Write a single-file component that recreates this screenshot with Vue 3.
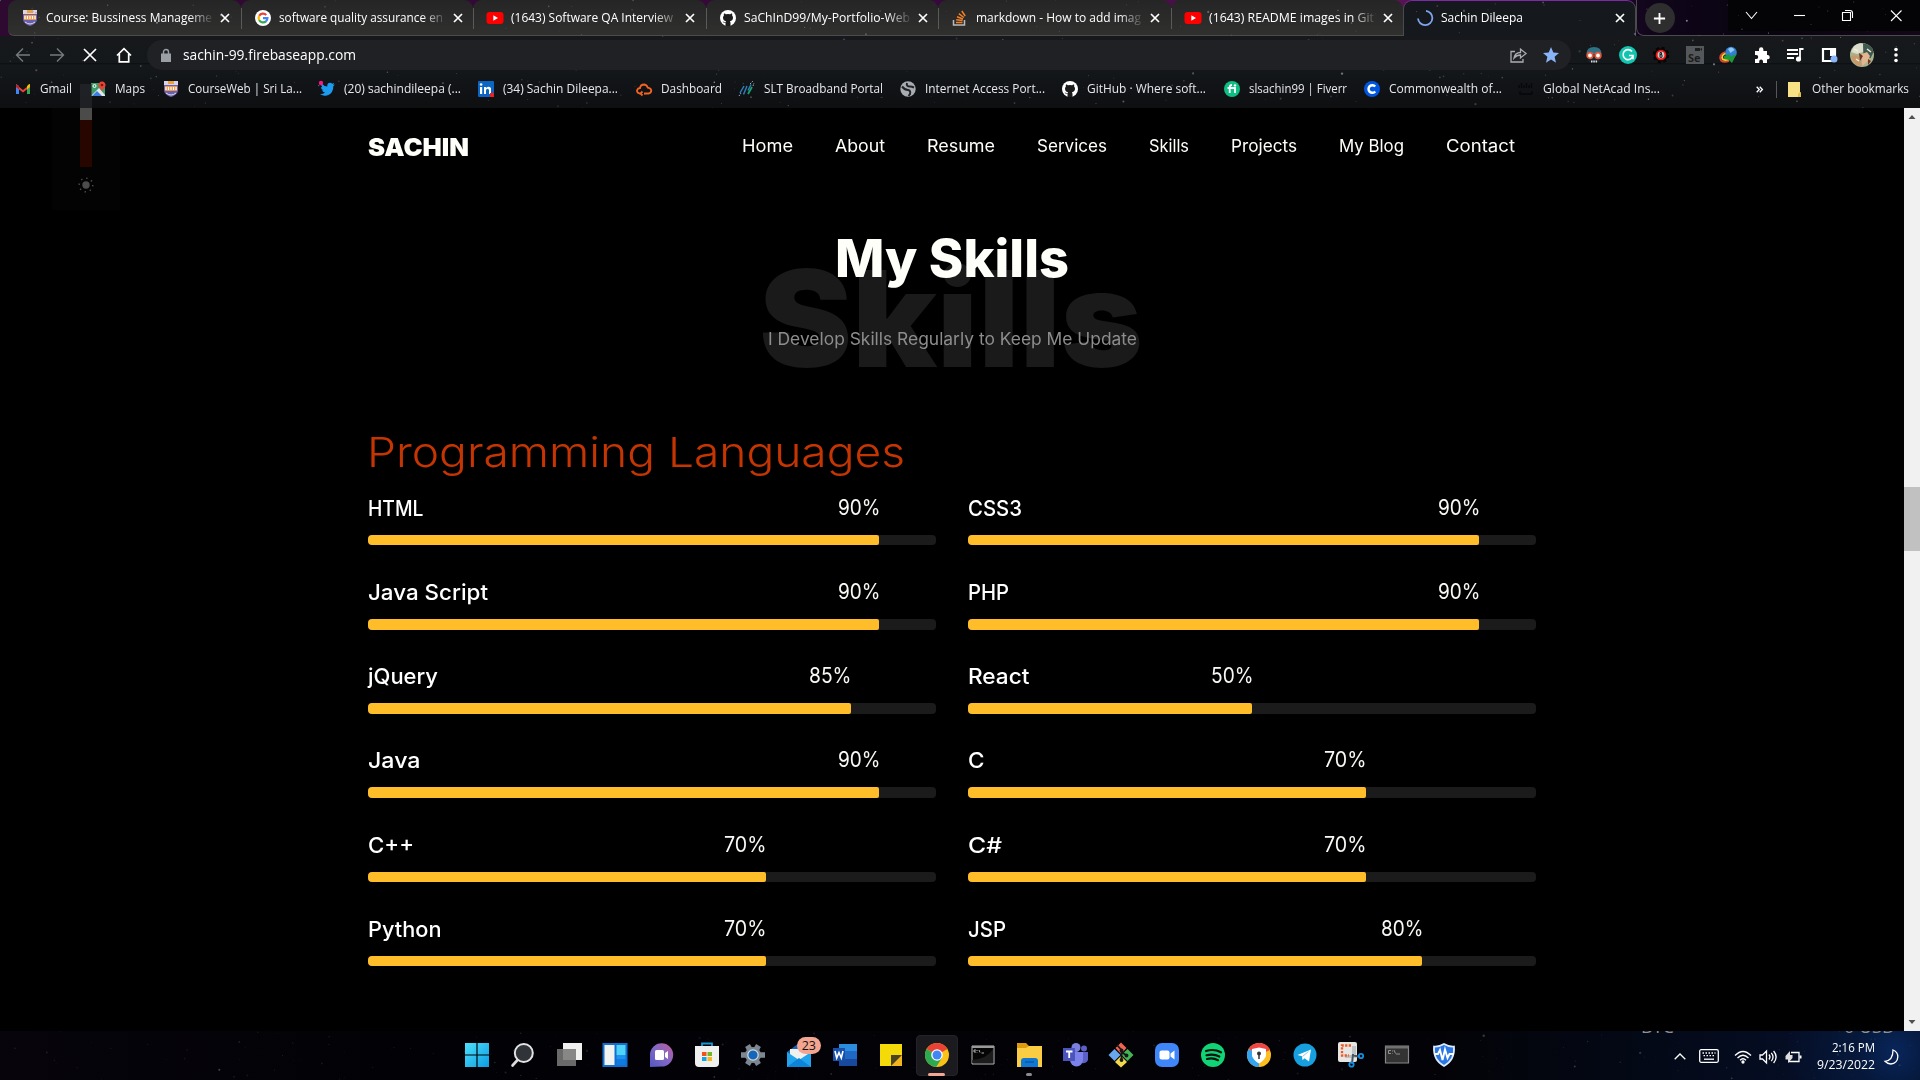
<script setup>
// Stretches a text run horizontally so that it fills the given width.
const vFit = {
  mounted(el, { value }) {
    const natural = el.getBoundingClientRect().width
    if (!natural || !value) return
    el.style.transform = `scaleX(${value / natural})`
    el.style.marginRight = `${value - natural}px`
  },
}

const shield = '<path d="M1 0h14v10q-1 4-7 6-6-2-7-6z" fill="#6a60b0"/><path d="M1 0h14v4H1z" fill="#ddd3e6"/><path d="M5 0h6v3H5z" fill="#e8a33c"/><path d="M2 5h12v5H2z" fill="#eb9850"/><path d="M3 6v3M5.500 6v3M8 6v3M10.500 6v3M13 6v3" stroke="#fff" stroke-width="1.200"/><path d="M3 12q5 4 10 0" stroke="#ddd" fill="none"/>'
const github = '<circle cx="8" cy="8" r="8" fill="#fff"/><path d="M5.500 16v-3C3.500 13.200 3.400 12 2.600 11.500c1.600-.3 1.600 1.500 3 .8.100-.5.300-.8.500-1C3.800 11 3 9.500 3 7.600c0-1 .4-1.700.9-2.200-.2-.7-.1-1.500.1-2 1 0 1.700.6 2.100.9a8 8 0 0 1 3.800 0c.5-.3 1.200-.9 2.100-.9.300.6.300 1.400.1 2 .6.600.9 1.300.9 2.200 0 2-.9 3.400-3.100 3.700.4.400.6 1 .6 1.600V16z" fill="#1c1c1c"/>'
const youtube = '<rect x="-.5" y="2" width="17" height="12" rx="3" fill="#f00"/><path d="M6.300 5.300 11 8l-4.700 2.700z" fill="#fff"/>'

const tabs = [
  { title: 'Course: Bussiness Manageme', w: 166, icon: shield },
  { title: 'software quality assurance en', w: 164, icon: '<circle cx="8" cy="8" r="8" fill="#fff"/><g fill="none" stroke-width="2.200"><path d="M4.200 5.800A4.500 4.500 0 0 1 11.300 4.900" stroke="#ea4335"/><path d="M4.200 10.200a4.500 4.500 0 0 1 0-4.400" stroke="#fbbc05"/><path d="M11 11.300a4.500 4.500 0 0 1-6.800-1.100" stroke="#34a853"/><path d="M8 8.200h4.400a4.500 4.500 0 0 1-1.500 3.200" stroke="#4285f4"/></g>' },
  { title: '(1643) Software QA Interview', w: 162, icon: youtube },
  { title: 'SaChInD99/My-Portfolio-Web', w: 166, icon: github },
  { title: 'markdown - How to add imag', w: 165, icon: '<path d="M1.500 10v5h11v-5" fill="none" stroke="#bcbbbb" stroke-width="1.500"/><path d="M4 12.500h6.500M4.200 9.700l6.400.9M5 6.700l6 2.300M6.800 3.600l5 3.900M9.800 1l3.400 5" stroke="#f48024" stroke-width="1.500"/>' },
  { title: '(1643) README images in Git', w: 165, icon: youtube },
]

const bookmarks = [
  { t: 'Gmail', w: 32, slot: 75, icon: '<path d="M1 13V3l3 2v8z" fill="#4285f4"/><path d="M12 13V5l3-2v10z" fill="#34a853"/><path d="M1 3.500 8 9l7-5.500V6l-7 5.500L1 6z" fill="#ea4335"/><path d="M12 5.500 14 3l1 .5V6l-3 2.500z" fill="#fbbc04"/><path d="M1 6V3.500L4 5v3.500z" fill="#c5221f"/>' },
  { t: 'Maps', w: 30, slot: 73, icon: '<path d="M1 2h14v13H1z" fill="#3a9d6a"/><path d="M1 15 9 7l6 7v1z" fill="#e6e6e6"/><path d="m2 15 5-5 5 5z" fill="#3b7de0"/><path d="M12 10 8.500 5a3.600 3.600 0 1 1 7 0z" fill="#e94335"/><circle cx="12" cy="4" r="1.300" fill="#7c1712"/><circle cx="4.500" cy="5" r="1.500" fill="none" stroke="#fff"/>' },
  { t: "CourseWeb | Sri La...", w: 114, slot: 156, icon: shield },
  { t: '(20) sachindileepa (...', w: 117, slot: 159, icon: '<path d="M1 13q3 .2 5-1.500-2.500-.4-3-2.200h1.400Q1.700 8.200 2 6l1.300.3Q1.200 4.500 2.400 2.200 5 5.300 8.300 5.400 8 2 11 1.800q1.400 0 2.300 1l2-.7-1.200 1.800 1.800-.4-1.600 1.800C14.300 14 7 17 1 13" fill="#1d9bf0"/><circle cx="2" cy="2" r="2.200" fill="#f91880"/>' },
  { t: '(34) Sachin Dileepa...', w: 115, slot: 158, icon: '<rect width="16" height="16" rx="1" fill="#0a66c2"/><path d="M2 6h2.200v7H2zM6 6h2v1q2.500-2.500 5 0v6h-2V9q-1.500-2.500-3 0v4H6z" fill="#fff"/><circle cx="3.100" cy="3.500" r="1.300" fill="#fff"/><rect x="12" y="12" width="4" height="4" fill="#f02020"/>' },
  { t: 'Dashboard', w: 61, slot: 103, icon: '<path d="M5 12.500H3.500Q.7 11.800 1 9.200 1.800 7 4 7q.5-3.500 4.200-3.500Q11 4 11.800 6.700q3.200.3 3.500 3-.3 2.500-2.800 2.800H8m-1.500-2L4.500 12.500l2 2" fill="none" stroke="#f26322" stroke-width="1.800"/>' },
  { t: 'SLT Broadband Portal', w: 119, slot: 161, icon: '<path d="M1 12 5 5M4.500 13.500 8 5M9 9.500l3-6" stroke="#2e7db8" stroke-width="1.500"/><path d="M9 13l4-7" stroke="#1ca06a" stroke-width="1.800"/><path d="M11 3l3-3M0 15l2-3M14 5l1-3" stroke="#9ab" stroke-dasharray="1.500 1"/>' },
  { t: 'Internet Access Port...', w: 120, slot: 162, icon: '<circle cx="8" cy="8" r="7.700" fill="#a9adb1"/><path d="M2 5.500q3 3.500 6 3.500 3 .5 2 4l-1.500 2" stroke="#202327" stroke-width="2" fill="none"/><path d="M7 2q-1 3.500 3 3.500 2 0 4 1" stroke="#202327" stroke-width="2" fill="none"/>' },
  { t: 'GitHub · Where soft...', w: 119, slot: 162, icon: github },
  { t: 'slsachin99 | Fiverr', w: 98, slot: 140, icon: '<circle cx="8" cy="8" r="8" fill="#0dbf83"/><path d="M3.500 7H11v5M5.700 12V6q0-2 2.300-2" stroke="#fff" stroke-width="1.800" fill="none"/><circle cx="11" cy="4.400" r="1.200" fill="#fff"/>' },
  { t: 'Commonwealth of...', w: 113, slot: 154, icon: '<circle cx="8" cy="8" r="8" fill="#0056e0"/><path d="M11.200 5.500a3.800 3.800 0 1 0 0 5" stroke="#fff" stroke-width="2.500" fill="none"/>' },
  { t: 'Global NetAcad Ins...', w: 117, slot: 150, icon: '<path d="M1 4v3M3.500 2v5M6 4v3M8.500 2v5M11 4v3M13.500 2v5M2 10v3h12v-3" stroke="#05070a" stroke-width="1.300" fill="none"/>' },
]

const extensions = [
  { name: 'mask', icon: '<path d="M1.500 8q0-7 7.500-7t7.500 7z" fill="#2f7185"/><path d="M3.500 8h11v8h-11z" fill="#17242c"/><circle cx="5" cy="9.500" r="2.800" fill="#fff" stroke="#e0583c" stroke-width="1.800"/><circle cx="13" cy="9.500" r="2.800" fill="#fff" stroke="#e0583c" stroke-width="1.800"/><path d="M6 15.500h1.500m.8 0h1.500m.8 0h1.500" stroke="#ddd" stroke-width="2"/>' },
  { name: 'grammar', icon: '<circle cx="9" cy="9" r="9" fill="#11c5ae"/><path d="M13 5.500A5 5 0 1 0 14 9.500h-4m4 0v3.800" stroke="#fff" stroke-width="1.600" fill="none"/>' },
  { name: 'blocker', icon: '<circle cx="9" cy="9" r="6.800" fill="#0d0505" stroke="#060505" stroke-width="3" stroke-dasharray="3 2.400"/><circle cx="9" cy="9" r="4.400" fill="#ccc" stroke="#e81414" stroke-width="1.900"/><path d="M8 6.500v5m0-5h1.500v2.200H8h2v2.600H8" stroke="#222" fill="none"/>' },
  { name: 'selenium', icon: '<path d="M0 0h18v18H0z" fill="#55585a"/><path d="M9 2h5v3H9zM14 3l2-1v3z" fill="#1b1d1f"/><text x="2" y="16" font-family="Open Sans" font-size="11" font-weight="700" fill="#1b1d1f">Se</text>' },
  { name: 'download', icon: '<path d="M6 6Q-1 9 2 14.500q3 2.500 8 .5" fill="none" stroke="#e3442e" stroke-width="1.800"/><path d="M8 7Q1 9 4 13.500q2 1 6 0" fill="none" stroke="#f3d231" stroke-width="1.800"/><circle cx="12" cy="6.500" r="5.800" fill="#347fd0"/><path d="M9 3q4-3.500 6.500 1l-4 3z" fill="#8bc9f3"/><path d="M5 10l5-2 1.500 2.500L17.500 8 13 17l-3-3-5-1z" fill="#1a9b37"/>' },
  { name: 'puzzle', icon: '<path d="M2 5h4V3.500a2.200 2.200 0 0 1 4.400 0V5H14v4h1a2.200 2.200 0 0 1 0 4.300h-1V17h-4v-1.500a1.900 1.900 0 0 0-3.800 0V17H2v-4h1.300a1.900 1.900 0 0 0 0-3.900H2z" fill="#fff"/>' },
  { name: 'playlist', icon: '<path d="M1 4h11M1 8h11M1 12h7" stroke="#fff" stroke-width="1.800"/><path d="M17.500 3H14v10" stroke="#fff" stroke-width="1.800" fill="none"/><circle cx="12.500" cy="13" r="2.600" fill="#fff"/>' },
  { name: 'panel', icon: '<path d="M3 3h12v12H3z" fill="none" stroke="#fff" stroke-width="2.200"/><path d="M10 2h6v8h-6z" fill="#fff"/><circle cx="14" cy="13" r="3.500" fill="#8ab4f8"/>' },
]

const menu = [
  ['Home', 51, 42], ['About', 50, 42], ['Resume', 68, 42], ['Services', 70, 42],
  ['Skills', 40, 42], ['Projects', 66, 42], ['My Blog', 65, 42], ['Contact', 69, 0],
].map(([t, w, gap]) => ({ t, w, gap }))

const columns = [
  [['HTML', 54.5, 90], ['Java Script', 119, 90], ['jQuery', 69, 85], ['Java', 51.5, 90], ['C++', 45, 70], ['Python', 72.5, 70]],
  [['CSS3', 53, 90], ['PHP', 40, 90], ['React', 60.5, 50], ['C', 15.5, 70], ['C#', 33, 70], ['JSP', 37, 80]],
].map((col) => col.map(([name, w, level]) => ({ name, w, level })))

const chromeWheel = '<circle cx="12" cy="12" r="12" fill="#fbc116"/><path d="M12 12 1.600 6A12 12 0 0 1 22.400 6z" fill="#ea4335"/><path d="M12 12 1.600 6a12 12 0 0 0 9.500 18L17 15z" fill="#2da94f"/>'
const apps = [
  { icon: '<defs><linearGradient id="win" x2="1" y2="1"><stop stop-color="#4ee0fb"/><stop offset="1" stop-color="#0c9ce2"/></linearGradient></defs><path d="M0 0h11.400v11.400H0zM12.600 0H24v11.400H12.600zM0 12.600h11.400V24H0zM12.600 12.600H24V24H12.600z" fill="url(#win)"/>' },
  { icon: '<path d="M7 16.500 1.500 22.500" stroke="#dcdcdc" stroke-width="2.600" stroke-linecap="round"/><circle cx="12.800" cy="10" r="9" fill="#303338" stroke="#e3e3e3" stroke-width="2"/>' },
  { icon: '<path d="M6 0h19v17H6z" fill="#f1f1ef"/><path d="M0 6h19v17H0z" fill="#777" fill-opacity=".88"/>' },
  { icon: '<path d="M-.5 0h25v24h-25z" fill="#126fd0"/><path d="M1.500 2h10v20h-10z" fill="#f2f2f0"/><path d="M13.500 2h9v10h-9z" fill="#4fd3fb"/><path d="M13.500 12h9v4h-9z" fill="#1d92ee"/><path d="M13.500 16h9v6h-9z" fill="#0f7be0"/>' },
  { icon: '<defs><linearGradient id="ch" x1="1" x2="0" y2="1"><stop stop-color="#c05a9a"/><stop offset=".5" stop-color="#8168c6"/><stop offset="1" stop-color="#5158c4"/></linearGradient></defs><path d="M1 24V12A11.600 11.600 0 1 1 12.500 23.500z" fill="url(#ch)"/><rect x="6" y="7" width="9" height="10" rx="1.500" fill="#fff"/><path d="m16 10 3-2v8l-3-2z" fill="#fff"/>' },
  { icon: '<path d="M7 4V.500h10V4" fill="none" stroke="#1597d4" stroke-width="1.800"/><path d="M0 3h24v17q0 4-4 4H4q-4 0-4-4z" fill="#f0f0ee"/><path d="M7 9h4.500v4H7z" fill="#f1511b"/><path d="M12.500 9H17v4h-4.500z" fill="#6fb729"/><path d="M7 14h4.500v4H7z" fill="#17a3e3"/><path d="M12.500 14H17v4h-4.500z" fill="#fbb813"/>' },
  { icon: '<circle cx="12" cy="12" r="8" fill="#7c8791"/><path d="M6.500 2.500 12 12m5.500-9.500L12 12m-5.500 9.500L12 12m5.500 9.500L12 12M0 12h24" stroke="#7c8791" stroke-width="5.500"/><circle cx="12" cy="12" r="5.200" fill="#1467b8" stroke="#d5dade" stroke-width="1.200"/>' },
  { badge: '23', icon: '<path d="M0 9 12 0l12 9v14H0z" fill="#1762b4"/><path d="M3 6h19v13H3z" fill="#f0f0ee"/><path d="m0 9 12 8 12-8v15H0z" fill="#22a4ec"/><path d="m0 24 12-9 12 9z" fill="#0c84da"/>' },
  { icon: '<path d="M6 1h18v22H6z" fill="#2a8de0"/><path d="M6 8h18v8H6z" fill="#1f68c4"/><path d="M6 16h18v7H6z" fill="#174a9c"/><path d="M0 5h12v13H0z" fill="#184fa8"/><path d="m2 8 1.700 7L6 9.500 8.300 15 10 8" stroke="#fff" stroke-width="1.600" fill="none"/>' },
  { icon: '<path d="M1 1h22v12l-9 10H1z" fill="#f4da08"/><path d="M12 12h11v11H12z" fill="#f3b51d"/><path d="M12 12h11L12 23z" fill="#4a4420"/>' },
  { active: true, icon: chromeWheel + '<circle cx="12" cy="12" r="5.800" fill="#fff"/><circle cx="12" cy="12" r="4.500" fill="#4285f4"/>' },
  { icon: '<path d="M1 3h22v18H1z" fill="#050505" stroke="#b7b7b7"/><path d="M1 3h22v2H1z" fill="#999"/><path d="M1 17Q16 16 22 6v14H1z" fill="#222" fill-opacity=".8"/><path d="M5 7H3v2h2M6 7v1m0 1v.5M8 7l1 2.500M10.500 10H13" stroke="#ddd" stroke-width=".8" fill="none"/>' },
  { open: true, icon: '<path d="M0 0h9l3 3h12v8H0z" fill="#dd9c0d"/><path d="M0 5h9l3-2h13v21H0z" fill="#fbcd43"/><path d="M4 24v-6q0-3 3-3h11q3 0 3 3v6z" fill="#1077d2"/><path d="M8 19h9" stroke="#0a5aa5" stroke-width="1.500"/>' },
  { icon: '<circle cx="13" cy="4.500" r="4.500" fill="#7b7fe0"/><circle cx="21" cy="5.500" r="3" fill="#5a60c6"/><path d="M14 9h11v8q-2 4-7 3z" fill="#5a60c6"/><path d="M7 9h13v8a6.500 6.500 0 0 1-13 0z" fill="#7b83eb"/><path d="M0 5h12v13H0z" fill="#4b53bc"/><path d="M3 8.500h6.500M6.200 8.500V15" stroke="#fff" stroke-width="1.800"/>' },
  { icon: '<path d="M12-.5 17.500 5 12 11 6.500 5z" fill="#f1634f"/><path d="M5.500 6 11.500 12l-6 6-6-6z" fill="#6aa5f0"/><path d="m18.500 6 6 6-6 6-6-6z" fill="#45b455"/><path d="m12 13 6 6-6 5.500L6 19z" fill="#f3d84e"/><path d="M8 2l4.500 5v10M12.500 9l5 3.500" stroke="#15181b" stroke-width="1.800" fill="none"/><circle cx="12.500" cy="7.500" r="1.900" fill="#15181b"/><circle cx="12.500" cy="17" r="1.900" fill="#15181b"/><circle cx="17.500" cy="12.500" r="1.900" fill="#15181b"/>' },
  { icon: '<rect width="24" height="24" rx="7" fill="#3f86f8"/><rect x="4.500" y="7.500" width="10" height="9" rx="2" fill="#fff"/><path d="m15.500 10.500 4-3v9l-4-3z" fill="#fff"/>' },
  { icon: '<circle cx="12" cy="12" r="12" fill="#11d476"/><path d="M5 8q8-2.500 15 1.300M5.500 12.300q7-2 12.800 1.200M6 16q6-1.500 11 1.200" stroke="#06150d" stroke-width="2.200" stroke-linecap="round" fill="none"/>' },
  { icon: '<circle cx="12" cy="12" r="12" fill="#fdbf20"/><path d="M12 12 1.600 6A12 12 0 0 1 23 7z" fill="#f04545"/><path d="M12 12 1.600 6A12 12 0 0 0 12 24z" fill="#35a4ef"/><path d="M5 6l7-1.500L19 6v7q-2 5-7 7.500-5-2.500-7-7.500z" fill="#fff"/><circle cx="12" cy="10.500" r="2" fill="#333"/><path d="M12 10v6" stroke="#333" stroke-width="1.500"/>' },
  { icon: '<circle cx="12" cy="12" r="11.500" fill="#16a0e0"/><path d="M4.500 12 18 6.500 16 18.500l-4.500-3.300-2 2-.5-4z" fill="#fff"/><path d="m9.500 13.500 6-5" stroke="#8bcbed"/>' },
  { icon: '<rect x="-1" y="-1" width="19" height="20" rx="2" fill="#e6e6e4"/><path d="M13 3h4v12H6v-3h7z" fill="#bfc3c4"/><path d="M12 2.500H3v10h7" stroke="#ee5a24" stroke-width="2.300" stroke-dasharray="2.300 1.300" fill="none"/><path d="m13 12 8 2m-7-3-1 10" stroke="#46555f" stroke-width="2"/><circle cx="22" cy="13" r="2.200" fill="none" stroke="#128fe0" stroke-width="1.800"/><circle cx="12.500" cy="21.500" r="2.200" fill="none" stroke="#128fe0" stroke-width="1.800"/>' },
  { icon: '<path d="M.5 3h23v17H.5z" fill="#333" stroke="#888" stroke-width="1.200"/><path d="M.5 3h23v2.500H.5z" fill="#707070"/><path d="M6 7.500H3.500v3H6M7.500 7.500v1M7.500 10v.5M9 7l1.500 3.500M11 11h4" stroke="#aaa" stroke-width=".8" fill="none"/>' },
  { icon: '<path d="M12 1q5 3 10 2.500Q23 17 12 23 1 17 2 3.500 7 4 12 1z" fill="#2a76e3" stroke="#dcebff" stroke-width="1.700"/><path d="M2.500 11H6l2-4 2.500 10L13 6.500 15.500 15l2-4H22" fill="none" stroke="#fff" stroke-width="1.900"/>' },
]

// Deterministic star field for the browser theme and the desktop wallpaper.
function starField(seed, count, width, height) {
  let s = seed
  const rnd = () => ((s = (s * 16807) % 2147483647) / 2147483647)
  const tints = ['#8f8c88', '#60656e', '#9aa6c4', '#6b5148', '#43507a', '#555']
  return Array.from({ length: count }, () => ({
    x: rnd() * width, y: rnd() * height, r: 0.4 + rnd() * rnd() * 0.9,
    c: tints[Math.floor(rnd() * tints.length)], o: 0.3 + rnd() * 0.6,
  }))
}
const themeStars = starField(4217, 330, 1920, 108)
const wallStars = starField(991, 180, 1920, 49)
</script>

<template>
  <div class="screen">
    <header class="browser">
      <svg class="stars" width="1920" height="108">
        <circle v-for="(s, i) in themeStars" :key="i" :cx="s.x" :cy="s.y" :r="s.r" :fill="s.c" :opacity="s.o" />
      </svg>

      <div class="tabstrip">
        <div class="tabs">
          <div v-for="(tab, i) in tabs" :key="i" class="tab">
            <svg class="fav" viewBox="0 0 16 16" v-html="tab.icon"></svg>
            <div class="title faded"><span v-fit="tab.w" class="fit">{{ tab.title }}</span></div>
            <svg class="close" viewBox="0 0 10 10"><path d="m1 1 8 8M9 1 1 9" /></svg>
          </div>
          <div class="tab active">
            <svg class="fav" viewBox="0 0 16 16"><path d="M9 .8A7.200 7.200 0 1 1 1 8.500" fill="none" stroke="#7ea6ee" stroke-width="1.800" /></svg>
            <div class="title"><span v-fit="82" class="fit">Sachin Dileepa</span></div>
            <svg class="close" viewBox="0 0 10 10"><path d="m1 1 8 8M9 1 1 9" /></svg>
          </div>
        </div>
        <div class="strip-rest">
          <div class="newtab"><svg viewBox="0 0 14 14"><path d="M7 1v12M1 7h12" stroke="#fff" stroke-width="2" /></svg></div>
          <div class="winctl">
            <svg viewBox="0 0 48 32"><path d="m18 12 5.500 6.500L29 12" /></svg>
            <svg viewBox="0 0 48 32"><path d="M18 15.500h11" /></svg>
            <svg viewBox="0 0 48 32"><path d="M18.500 12.500h8v8h-8zM21 10.500h5q2.500 0 2.500 2.500v5" /></svg>
            <svg viewBox="0 0 48 32"><path d="m19 10.500 10.500 10.500M29.500 10.500 19 21" /></svg>
          </div>
        </div>
      </div>

      <div class="toolbar">
        <div class="navbtns">
          <svg viewBox="0 0 16 16" class="dim"><path d="M15 8H1.500M8 1.500 1.500 8 8 14.500" /></svg>
          <svg viewBox="0 0 16 16" class="dim"><path d="M1 8h13.500M8 1.500 14.500 8 8 14.500" /></svg>
          <svg viewBox="0 0 16 16"><path d="m2 2 12 12M14 2 2 14" /></svg>
          <svg viewBox="0 0 16 16"><path d="M1 8.500 8 1.700l7 6.800M3.300 7v7.800h9.400V7" /></svg>
        </div>
        <div class="omnibox">
          <svg class="lock" viewBox="0 0 10 13"><path d="M0 4.500h10V13H0z" fill="#9aa0a6" /><path d="M2.500 5V3a2.500 2.500 0 0 1 5 0v2" fill="none" stroke="#9aa0a6" stroke-width="1.400" /></svg>
          <span v-fit="173" class="fit url">sachin-99.firebaseapp.com</span>
          <svg class="share" viewBox="0 0 17 16"><path d="M5 4.500H1V15h12v-3M4 11q1-5.500 6.500-5.500V2L16 6.500 10.500 11V8Q6.500 8 4 11z" fill="none" stroke="#aaaeb2" stroke-width="1.300" /></svg>
          <svg class="fav star" viewBox="0 0 16 16"><path d="m8 0 2.300 5.600 5.700.5-4.400 3.700 1.400 5.900L8 12.500 3 15.700l1.400-5.900L0 6.100l5.700-.5z" fill="#8ab4f8" /></svg>
        </div>
        <div class="exts">
          <svg v-for="e in extensions" :key="e.name" viewBox="0 0 18 18" v-html="e.icon"></svg>
          <svg class="avatar" viewBox="0 0 24 24">
            <circle cx="12" cy="12" r="12" fill="#a9b28c" />
            <path d="M4 3q5-4 9-2v8l-6 2-6-2z" fill="#dbdccb" /><path d="M1 13q5-2 8 1l3 9Q3 23 1 13z" fill="#c7986a" />
            <path d="M13 .2q9 1 10.500 9l-3 6-7-3z" fill="#3e5950" /><path d="m12 11 5-2 3 4-3 6-5 4z" fill="#e2b691" />
            <path d="M9 10l4 3-3 5zM18 16l3 2-3 4z" fill="#75331d" /><path d="m4 6 4 2M17 6l4 3M6 16l3 2" stroke="#f4edd8" stroke-width="1.500" />
          </svg>
          <svg viewBox="0 0 18 18" class="dots"><circle cx="9" cy="3.500" r="1.800" /><circle cx="9" cy="9" r="1.800" /><circle cx="9" cy="14.500" r="1.800" /></svg>
        </div>
      </div>

      <div class="bookmarks">
        <div v-for="b in bookmarks" :key="b.t" class="bm" :style="{ width: b.slot + 'px' }">
          <svg class="fav" viewBox="0 0 16 16" v-html="b.icon"></svg>
          <span v-fit="b.w" class="fit">{{ b.t }}</span>
        </div>
        <div class="bm-end">
          <svg class="more" viewBox="0 0 8 8"><path d="m.8.8 3 3.200-3 3.200M4.300.8l3 3.200-3 3.200" fill="none" stroke="#fff" stroke-width="1.500" /></svg>
          <i class="rule"></i>
          <svg class="folder" viewBox="0 0 13 15"><path d="M0 0h12v10l1 1v4H0z" fill="#f8e084" /><path d="M10 15v-3l2-2 1 1v4z" fill="#dec04e" /></svg>
          <span v-fit="97" class="fit">Other bookmarks</span>
        </div>
      </div>
    </header>

    <main class="page">
      <div class="content">
        <nav class="nav">
          <span v-fit="101" class="fit brand">SACHIN</span>
          <div class="menu">
            <span v-for="m in menu" :key="m.t" class="item" :style="{ paddingRight: m.gap + 'px' }"><a v-fit="m.w" class="fit">{{ m.t }}</a></span>
          </div>
        </nav>
        <section class="hero">
          <div class="ghost"><span v-fit="384" class="fit">Skills</span></div>
          <h1><span v-fit="234" class="fit">My Skills</span></h1>
          <p><span v-fit="369" class="fit">I Develop Skills Regularly to Keep Me Update</span></p>
        </section>
        <h2><span v-fit="538" class="fit">Programming Languages</span></h2>
        <div class="skills">
          <div v-for="(col, c) in columns" :key="c" class="col">
            <div v-for="s in col" :key="s.name" class="skill">
              <div class="head" :style="{ width: s.level + '%' }">
                <span v-fit="s.w + 1" class="fit name">{{ s.name }}</span>
                <span v-fit="42.5" class="fit pct">{{ s.level }}%</span>
              </div>
              <div class="track"><div class="fill" :style="{ width: s.level + '%' }"></div></div>
            </div>
          </div>
        </div>
      </div>
      <div class="scrollbar">
        <svg viewBox="0 0 16 16"><path d="M4.500 10.500h7L8 6.500z" /></svg>
        <div class="rail"><div class="thumb"></div></div>
        <svg viewBox="0 0 16 16"><path d="M4.500 5.500h7L8 9.500z" /></svg>
      </div>
    </main>

    <div class="flyout">
      <div class="slider"><i class="over"></i><i class="rest"></i><i class="value"></i></div>
      <svg viewBox="0 0 16 16"><circle cx="8" cy="8" r="3.700" fill="#4c4c4b" /><circle cx="8" cy="8" r="6.800" fill="none" stroke="#4c4c4b" stroke-width="1.500" stroke-dasharray="1.400 3.940" /></svg>
    </div>

    <footer class="taskbar">
      <svg class="stars" width="1920" height="49">
        <circle v-for="(s, i) in wallStars" :key="i" :cx="s.x" :cy="s.y" :r="s.r" :fill="s.c" :opacity="s.o * 0.4" />
      </svg>
      <span class="ticker pair">BTC</span>
      <span class="ticker price">+0 USD</span>
      <div class="apps">
        <div v-for="(a, i) in apps" :key="i" class="app" :class="{ on: a.active, open: a.open }">
          <svg viewBox="0 0 24 24" v-html="a.icon"></svg>
          <span v-if="a.badge" class="badge">{{ a.badge }}</span>
        </div>
      </div>
      <div class="tray">
        <svg class="t-chev" viewBox="0 0 12 7"><path d="M.7 6.300 6 1l5.300 5.300" /></svg>
        <svg class="t-key" viewBox="0 0 20 14"><rect x=".7" y=".7" width="18.600" height="12.600" rx="1.500" /><path d="M3.500 4h13M4.500 6.700h12" stroke-dasharray="1.500 1.500" /><path d="M5 10.200h10" /></svg>
        <svg class="t-wifi" viewBox="0 0 18 14"><path d="M1 5.500q8-8 16 0M3.500 8q5.500-5.500 11 0M6 10.300q3-3 6 0" /><circle cx="9" cy="12" r="1" fill="#fff" /></svg>
        <svg class="t-vol" viewBox="0 0 18 14"><path d="M1 5v4h2.500L7.500 13V1L3.500 5zM10 4.500q2 2.500 0 5M12.300 2.800q3.500 4.200 0 8.400M14.600 1q5 6 0 12" /></svg>
        <svg class="t-bat" viewBox="0 0 18 14"><path d="M7 2.500h8v9H4" /><path d="M16.500 5.500v3" stroke-width="2" /><path d="M6 1 1.500 6v3.500H4V13l4.500-5V5H6z" fill="#ddd" stroke="none" /></svg>
        <div class="clock"><span v-fit="43" class="fit">2:16 PM</span><span v-fit="58" class="fit">9/23/2022</span></div>
        <svg class="t-moon" viewBox="0 0 15 16"><path d="M9 1q5 2 4.800 7-.5 6.500-7 7Q3.500 15 1 12.300 9 11.500 9 1z" /></svg>
      </div>
    </footer>
  </div>
</template>

<style>
body { margin: 0; background: #000; overflow: hidden; }
</style>

<style scoped>
* { box-sizing: border-box; }
.screen { position: relative; width: 1920px; height: 1080px; display: flex; flex-direction: column; background: #000; overflow: hidden; }
svg { display: block; flex: none; overflow: visible; }
.fit { display: inline-block; white-space: pre; transform-origin: 0 50%; flex: none; }
.stars { position: absolute; left: 0; top: 0; pointer-events: none; overflow: hidden; z-index: 1; }

.browser { position: relative; height: 108px; background: linear-gradient(#16181c 36px, #15181b 63px, #0b0d0f 63px, #15181b 65px, #0d0f11); font: 12.500px/20px "Open Sans", sans-serif; color: #fff; }
.tabstrip { display: flex; height: 36px; background: linear-gradient(90deg, #2e0930, #38083c 50%, #5c1457 72%, #3d0a41 80%, #10061b 86%, #08040f 92%, #140718); }
.tabs { display: flex; padding-left: 8px; }
.tab { position: relative; width: 232.500px; height: 36px; display: flex; align-items: flex-start; padding-left: 14px; border-radius: 9px 9px 0 0; background: linear-gradient(#252525, #30302f); border-bottom: 1px solid #4b4b4b; }
.tab::after { content: ""; position: absolute; right: -1px; top: 8px; width: 1px; height: 21px; background: #5a5a59; z-index: 2; }
.tab:first-child { border-bottom-left-radius: 6px; }
.tab:nth-child(6)::after, .active::after { display: none; }
.tab.active { background: #15181c; border: 1px solid #4b4b4b; border-top-color: #7e2aa7; border-bottom: 0; padding-left: 12.500px; }
.tab .fav { margin-top: 9.500px; }
.tab.active .fav { margin-top: 8.500px; }
.fav { width: 16px; height: 16px; }
.title { width: 166px; height: 20px; margin: 8px 0 0 8px; overflow: hidden; }
.active .title { margin-top: 7px; }
.faded { -webkit-mask-image: linear-gradient(90deg, #000 86%, rgba(0,0,0,.1)); mask-image: linear-gradient(90deg, #000 86%, rgba(0,0,0,.1)); }
.close { width: 10px; height: 10px; margin: 13px 0 0 8px; }
.active .close { margin-top: 12px; }
.close path { stroke: #fff; stroke-width: 1.700; }
.strip-rest { flex: 1; display: flex; justify-content: space-between; border-bottom: 1px solid #4b4b4b; border-left: 1px solid #4b4b4b; border-bottom-left-radius: 8px; }
.newtab { width: 30px; height: 30px; margin: 3px 0 0 8px; border-radius: 50%; background: #2e2e2e; display: grid; place-items: center; }
.newtab svg { width: 13px; height: 13px; }
.winctl { display: flex; height: 31px; background: #040306; }
.winctl svg { width: 48px; height: 32px; }
.winctl path { fill: none; stroke: #fff; stroke-width: 1.100; }

.toolbar { position: relative; z-index: 2; display: flex; height: 34px; padding-top: 4px; }
.navbtns { display: flex; width: 147px; padding-left: 15px; gap: 17.700px; align-items: center; height: 30px; }
.navbtns svg { width: 16px; height: 16px; }
.navbtns path { fill: none; stroke: #fff; stroke-width: 1.700; }
.navbtns .dim path { stroke: #77797b; stroke-width: 1.400; }
.omnibox { display: flex; align-items: center; width: 1424px; height: 30px; border-radius: 15px; background: #202124; padding: 0 12px 0 14px; }
.lock { width: 10px; height: 13px; }
.url { margin-left: 12px; font-size: 14.500px; }
.share { width: 17px; height: 16px; margin-left: auto; }
.star { margin-left: 16px; }
.exts { display: flex; align-items: center; height: 30px; padding-left: 14px; gap: 15.500px; }
.exts svg { width: 18px; height: 18px; }
.exts .avatar { width: 24px; height: 24px; margin: 0 -3px; }
.dots { fill: #fff; }
.bookmarks { position: relative; z-index: 2; display: flex; height: 37px; padding: 1px 0 0 15px; align-items: center; color: #e6e8ea; }
.bm { display: flex; align-items: center; gap: 9px; }
.bm-end { margin-left: auto; display: flex; align-items: center; padding-right: 11px; }
.more { width: 7px; height: 7px; }
.rule { width: 1px; height: 17px; background: #55585b; margin: 0 11px 0 13px; }
.folder { width: 13px; height: 15px; margin-right: 11px; }

.page { display: flex; height: 923px; background: #000; font-family: Inter, sans-serif; color: #fffffa; }
.content { width: 1904px; padding-left: 368px; }
.nav { display: flex; height: 77px; padding-top: 23px; line-height: 32px; }
.brand { font-size: 24.500px; font-weight: 900; }
.menu { display: flex; margin-left: 273px; font-size: 17px; line-height: 30px; font-weight: 400; }
.item { display: flex; }
.hero { position: relative; width: 1168px; height: 227px; text-align: center; }
.hero h1 { position: relative; margin: 0; padding-top: 38px; font-size: 52px; line-height: 71px; font-weight: 800; }
.hero p { position: relative; margin: 0; padding-top: 32px; font-size: 17px; line-height: 26px; color: #8d8d8d; }
.ghost { position: absolute; left: 0; right: 0; top: 53px; font-size: 134px; line-height: 160px; font-weight: 900; color: #1a1a1a; transform: translateX(-1px); }
h2 { margin: 0; height: 80px; padding-top: 10px; font-size: 41px; line-height: 61px; font-weight: 300; color: #c53502; }
h2 .fit { margin-left: -1px; }
.skills { display: flex; gap: 32px; }
.col { width: 568px; }
.skill { height: 84.150px; }
.head { display: flex; justify-content: space-between; height: 43px; white-space: nowrap; }
.name { font-size: 21.500px; line-height: 33px; font-weight: 500; color: #fff; }
.pct { font-size: 21px; line-height: 31px; color: #f8f8f4; position: relative; left: 1px; }
.track { height: 10.400px; border-radius: 4px; background: #1b1b1b; overflow: hidden; }
.fill { height: 100%; border-radius: 2px; background: #ffbd2a; }
.scrollbar { width: 16px; background: #f1f1f1; display: flex; flex-direction: column; }
.scrollbar svg { width: 16px; height: 17px; fill: #505050; }
.rail { flex: 1; padding-top: 362px; }
.thumb { height: 64px; background: #c1c1c1; }

.flyout { position: absolute; left: 52px; top: 84px; width: 68px; height: 126px; background: linear-gradient(transparent 24px, #030303 24px); z-index: 3; display: flex; flex-direction: column; align-items: center; }
.slider { width: 12px; display: flex; flex-direction: column; }
.slider .over { height: 24px; background: rgba(42, 44, 48, .6); }
.slider .rest { height: 12px; background: #4b4b49; }
.slider .value { height: 47px; background: #280600; }
.flyout svg { width: 16px; height: 16px; margin: 10px 1px 0 0; }

.taskbar { position: relative; height: 49px; overflow: hidden; font-family: "Open Sans", sans-serif; background: radial-gradient(circle at 1895px 20px, #08255a 0, #06183a 40px, transparent 110px), linear-gradient(90deg, #07040c, #020206 20%, #030307 75%, #040a1a 88%, #061130); }
.ticker { position: absolute; top: -14px; font: 18px/18px "Open Sans", sans-serif; color: #8e9095; }
.pair { left: 1641px; }
.price { right: 25px; }
.apps { position: absolute; left: 453.500px; top: 3px; display: flex; z-index: 2; }
.app { position: relative; width: 46.050px; height: 43px; display: flex; justify-content: center; padding-top: 9px; }
.app svg { width: 24px; height: 24px; }
.app.on::before { content: ""; position: absolute; inset: 1px 2px 1px; border-radius: 4px; background: #1b1b1f; border: 1px solid #242428; }
.app.on svg { position: relative; }
.app.on::after, .app.open::after { content: ""; position: absolute; bottom: 1px; width: 17px; height: 3px; border-radius: 2px; background: #f2a892; }
.app.open::after { width: 6px; background: #8c8c8c; }
.badge { position: absolute; left: 21px; top: 3px; width: 24px; height: 17px; border-radius: 9px; background: #f3a590; color: #151010; font-size: 12.500px; line-height: 17px; text-align: center; }
.tray { position: absolute; right: 21px; top: 6px; height: 38px; display: flex; align-items: center; z-index: 2; color: #fff; }
.tray svg { fill: none; stroke: #fff; stroke-width: 1.300; }
.t-chev { width: 12px; height: 7px; margin-right: 13px; }
.t-key { width: 20px; height: 14px; margin-right: 15px; }
.t-wifi { width: 18px; height: 14px; margin: 2px 7px 0 0; }
.t-vol { width: 18px; height: 14px; margin: 2px 7px 0 0; }
.t-bat { width: 18px; height: 14px; margin-top: 2px; }
.clock { width: 73px; display: flex; flex-direction: column; align-items: flex-end; font-size: 12.500px; line-height: 17px; }
.t-moon { width: 15px; height: 16px; margin: 2px 0 0 9px; }
</style>
